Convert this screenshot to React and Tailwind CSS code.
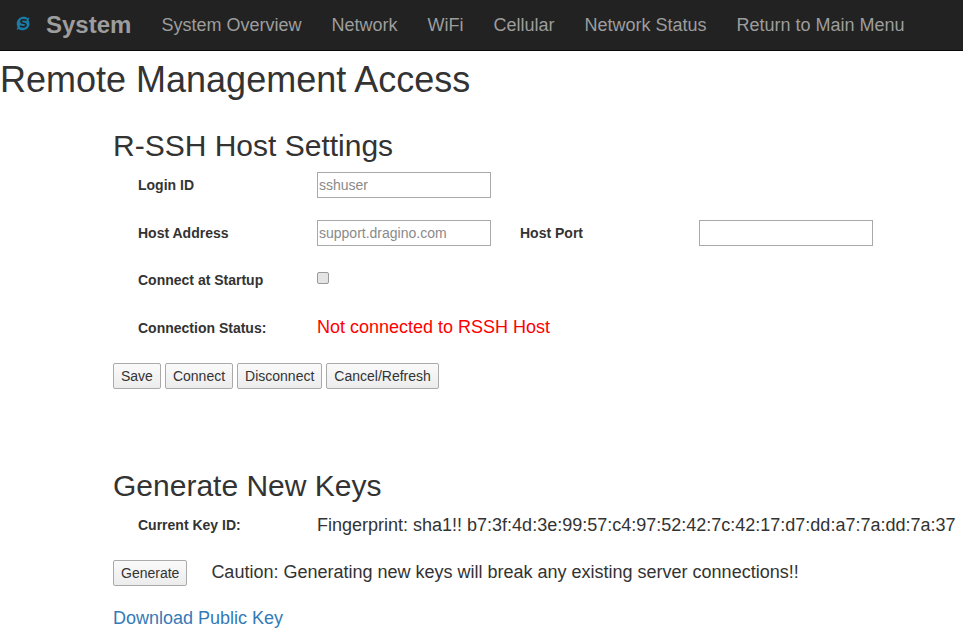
const navItems = ["System Overview", "Network", "WiFi", "Cellular", "Network Status", "Return to Main Menu"];

function Field({ label, children }) {
  return (
    <>
      <label className="w-[204px] pl-[25px] text-[14px] font-bold text-[#333]">{label}</label>
      {children}
    </>
  );
}

function TextBox({ placeholder }) {
  return (
    <input
      placeholder={placeholder}
      className="w-[174px] h-[26px] border border-[#a9a9a9] px-[1px] text-[14px] text-[#333] placeholder:text-[#8a8a8a] bg-white"
    />
  );
}

function Btn({ children }) {
  return (
    <button className="h-[26px] px-[7px] border border-[#aaa] rounded-[2px] bg-gradient-to-b from-[#fafafa] to-[#ececec] text-[14px] text-[#333]">
      {children}
    </button>
  );
}

export default function App() {
  return (
    <div className="min-h-screen bg-white font-['Liberation_Sans',Arial,sans-serif] text-[#333] overflow-hidden">
      <nav className="h-[51px] bg-[#222] border-b border-[#080808] flex items-center">
        <div className="w-[15px]" />
        <svg width="17" height="17" viewBox="0 0 17 17" className="mr-[14px] -mt-[3px]">
          {/* two blades around the S, open at the upper right and lower left */}
          <path d="M14.5 2.5 L13.5 5 C15 8 15 11 12.5 13.5 C9.5 16 5.5 15.5 3.5 14 L1.5 15 L2.5 12 C1 9 1.5 5.5 4 3.5 C7 1 10.5 1.5 12.5 3 Z" fill="#1a7ca6" />
          <path d="M11.5 5.5 C9 4 5.5 5 6 7 C6.5 9 11 7.5 11 10 C11 12 7.5 12.5 5 11" stroke="#222" strokeWidth="1.7" fill="none" />
        </svg>
        <span className="text-[24px] font-bold text-[#9d9d9d] mr-[30px]">System</span>
        <div className="flex gap-[30px] text-[18px] text-[#9d9d9d]">
          {navItems.map((item) => (
            <a key={item}>{item}</a>
          ))}
        </div>
      </nav>

      <h1 className="text-[36px] leading-[40px] mt-[9px] font-normal">Remote Management Access</h1>

      <div className="pl-[113px]">
        <h2 className="text-[30px] leading-[33px] mt-[29px]">R-SSH Host Settings</h2>

        <div className="flex items-center h-[26px] mt-[10px]">
          <Field label="Login ID"><TextBox placeholder="sshuser" /></Field>
        </div>
        <div className="flex items-center h-[26px] mt-[22px]">
          <Field label="Host Address"><TextBox placeholder="support.dragino.com" /></Field>
          <label className="ml-[29px] w-[179px] text-[14px] font-bold">Host Port</label>
          <TextBox />
        </div>
        <div className="flex items-center h-[26px] mt-[21px]">
          <Field label="Connect at Startup">
            <input type="checkbox" className="appearance-none w-[12px] h-[12px] -mt-[4px] border border-[#999] rounded-[2px] bg-[#e4e4e4]" />
          </Field>
        </div>
        <div className="flex items-center h-[26px] mt-[22px]">
          <Field label="Connection Status:">
            <span className="text-[18px] text-[#f00] -mt-[1px]">Not connected to RSSH Host</span>
          </Field>
        </div>

        <div className="flex gap-[4px] mt-[22px]">
          <Btn>Save</Btn>
          <Btn>Connect</Btn>
          <Btn>Disconnect</Btn>
          <Btn>Cancel/Refresh</Btn>
        </div>

        <h2 className="text-[30px] leading-[33px] mt-[80px]">Generate New Keys</h2>

        <div className="flex items-center h-[26px] mt-[10px] whitespace-nowrap">
          <Field label="Current Key ID:">
            <span className="text-[18px]">Fingerprint: sha1!! b7:3f:4d:3e:99:57:c4:97:52:42:7c:42:17:d7:dd:a7:7a:dd:7a:37</span>
          </Field>
        </div>

        <div className="flex items-center mt-[22px] whitespace-nowrap">
          <Btn>Generate</Btn>
          <span className="ml-[24px] -mt-[2px] text-[18px]">Caution: Generating new keys will break any existing server connections!!</span>
        </div>

        <a className="block mt-[19px] text-[18px] text-[#337ab7]">Download Public Key</a>
      </div>
    </div>
  );
}
